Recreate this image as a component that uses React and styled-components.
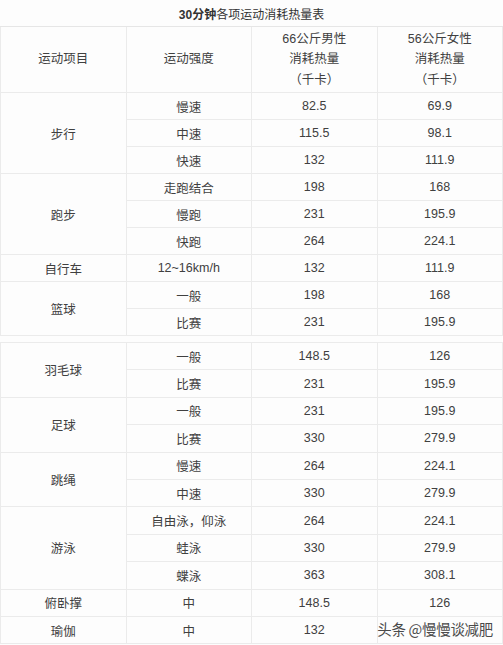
import React from 'react';
import styled, { createGlobalStyle } from 'styled-components';

const GlobalStyle = createGlobalStyle`
  html, body {
    margin: 0;
    padding: 0;
    background: #fff;
  }
  body {
    font-family: "Liberation Sans", "Noto Sans CJK SC", sans-serif;
    color: #333;
  }
`;

const Page = styled.div`
  position: relative;
  width: 503px;
  height: 645px;
  overflow: hidden;
  background: #fdfdfd;
`;

const Table = styled.table`
  width: 100%;
  border-collapse: collapse;
  table-layout: fixed;
  font-size: 12.5px;
  color: #404040;
  margin-top: ${props => props.gap || 0}px;
`;

const TitleCell = styled.td`
  height: 26px;
  padding: 0;
  text-align: center;
  border-bottom: 1px solid #e6e6e6;
  font-size: 12px;
  color: #333;

  b {
    font-weight: bold;
  }
`;

const HeadCell = styled.td`
  height: 65px;
  padding: 0;
  text-align: center;
  vertical-align: middle;
  line-height: 20.5px;
  border: 1px solid #ebebeb;
  border-top: none;
`;

const Row = styled.tr`
  height: ${props => props.h}px;
`;

const Cell = styled.td`
  padding: 0;
  text-align: center;
  vertical-align: middle;
  border: 1px solid #ebebeb;
  white-space: nowrap;
`;

const Watermark = styled.div`
  position: absolute;
  right: 10px;
  bottom: 6px;
  font-family: "Noto Sans CJK SC", sans-serif;
  font-size: 14.5px;
  color: #4a4a4a;
  letter-spacing: -0.3px;
`;

const partOne = [
  { name: '步行', rows: [['慢速', '82.5', '69.9'], ['中速', '115.5', '98.1'], ['快速', '132', '111.9']] },
  { name: '跑步', rows: [['走跑结合', '198', '168'], ['慢跑', '231', '195.9'], ['快跑', '264', '224.1']] },
  { name: '自行车', rows: [['12~16km/h', '132', '111.9']] },
  { name: '篮球', rows: [['一般', '198', '168'], ['比赛', '231', '195.9']] },
];

const partTwo = [
  { name: '羽毛球', rows: [['一般', '148.5', '126'], ['比赛', '231', '195.9']] },
  { name: '足球', rows: [['一般', '231', '195.9'], ['比赛', '330', '279.9']] },
  { name: '跳绳', rows: [['慢速', '264', '224.1'], ['中速', '330', '279.9']] },
  { name: '游泳', rows: [['自由泳，仰泳', '264', '224.1'], ['蛙泳', '330', '279.9'], ['蝶泳', '363', '308.1']] },
  { name: '俯卧撑', rows: [['中', '148.5', '126']] },
  { name: '瑜伽', rows: [['中', '132', '']] },
];

const Groups = ({ groups, h }) =>
  groups.map(g =>
    g.rows.map((r, i) => (
      <Row key={g.name + i} h={h}>
        {i === 0 && <Cell rowSpan={g.rows.length}>{g.name}</Cell>}
        <Cell>{r[0]}</Cell>
        <Cell>{r[1]}</Cell>
        <Cell>{r[2]}</Cell>
      </Row>
    ))
  );

const App = () => {
  return (
    <Page>
      <GlobalStyle />
      <Table>
        <tbody>
          <tr>
            <TitleCell colSpan={4}><b>30分钟</b>各项运动消耗热量表</TitleCell>
          </tr>
          <tr>
            <HeadCell>运动项目</HeadCell>
            <HeadCell>运动强度</HeadCell>
            <HeadCell>66公斤男性<br />消耗热量<br />（千卡）</HeadCell>
            <HeadCell>56公斤女性<br />消耗热量<br />（千卡）</HeadCell>
          </tr>
          <Groups groups={partOne} h={27} />
        </tbody>
      </Table>
      <Table gap={6}>
        <tbody>
          <Groups groups={partTwo} h={27.4} />
        </tbody>
      </Table>
      <Watermark>头条 @慢慢谈减肥</Watermark>
    </Page>
  );
};

export default App;
